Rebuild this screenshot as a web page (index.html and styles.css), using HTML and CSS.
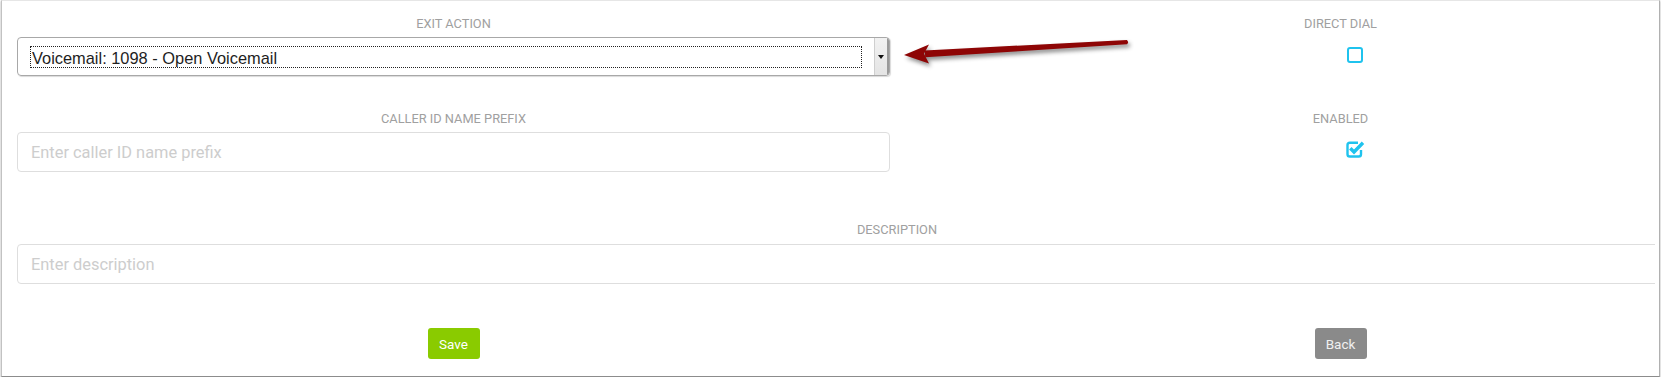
FILE: index.html
```html
<!DOCTYPE html>
<html lang="en">
<head>
    <meta charset="UTF-8">
    <title>Extension Settings</title>
    <link rel="stylesheet" href="styles.css">
</head>
<body>
    <div class="panel">
        <div class="viewport">
            <form class="form-grid">
                <div class="field">
                    <label class="field-label">Exit Action</label>
                    <div class="select-box">
                        <span class="select-value"><span class="select-focus">Voicemail: 1098 - Open Voicemail</span></span>
                        <span class="select-btn"><span class="caret"></span></span>
                    </div>
                </div>
                <div class="field field-check">
                    <label class="field-label">Direct Dial</label>
                    <span class="check"></span>
                </div>

                <div class="field row-2">
                    <label class="field-label" for="callerPrefix">Caller ID Name Prefix</label>
                    <input id="callerPrefix" class="text-input" type="text" placeholder="Enter caller ID name prefix">
                </div>
                <div class="field field-check row-2">
                    <label class="field-label">Enabled</label>
                    <svg class="check-on" width="19" height="17" viewBox="0 0 19 17">
                        <path d="M12 1.8 H3.8 Q1.5 1.8 1.5 4.1 V13.2 Q1.5 15.5 3.8 15.5 H12.7 Q15 15.5 15 13.2 V9" fill="none" stroke="#1fc3ee" stroke-width="2.4"/>
                        <path d="M4.3 7.3 L8 11 L17 1.8" fill="none" stroke="#1fc3ee" stroke-width="3.4"/>
                    </svg>
                </div>

                <div class="field field-wide">
                    <label class="field-label" for="description">Description</label>
                    <input id="description" class="text-input" type="text" placeholder="Enter description">
                </div>

                <div class="actions">
                    <button type="button" class="btn btn-save">Save</button>
                </div>
                <div class="actions">
                    <button type="button" class="btn btn-back">Back</button>
                </div>
            </form>
        </div>

        <!-- annotation arrow pointing at the select -->
        <svg class="arrow" width="250" height="45" viewBox="0 0 250 45">
            <path d="M34.8 22.4 L236.9 12 Q239 14 237.1 16.2 L35.2 29.2 Z" fill="#8e0505"/>
            <path d="M14 27 L39 16.5 L34 25.8 L39 35.5 Z" fill="#8e0505"/>
        </svg>
    </div>
</body>
</html>
```

FILE: styles.css
```css
body {
    margin: 0;
    background-color: #fff;
    font-family: Roboto, "Liberation Sans", sans-serif;
}

.panel {
    position: relative;
    margin: 0 1px;
    height: 377px;
    box-sizing: border-box;
    border-top: 1px solid #e6e6e6;
    border-left: 1px solid #c2c2c2;
    border-right: 1px solid #b0b0b0;
    border-bottom: 1px solid #8c8c8c;
    box-shadow: 0 1px 2px rgba(0, 0, 0, 0.35);
    padding: 15px 4px 0 15px;
    background-color: #fff;
}

.viewport {
    overflow: hidden;
    height: 345px;
}

.form-grid {
    display: grid;
    grid-template-columns: 873px 873px;
    column-gap: 14px;
    width: 1760px;
    align-items: start;
}

.field-label {
    display: block;
    text-align: center;
    font-size: 12.8px;
    line-height: 16px;
    color: #a0a0a0;
    text-transform: uppercase;
    margin-bottom: 5px;
}

.row-2 {
    margin-top: 35px;
}

.field-wide {
    grid-column: 1 / -1;
    margin-top: 50px;
}

.field-wide .field-label {
    margin-bottom: 6px;
}

/* native looking select */
.select-box {
    display: flex;
    height: 39px;
    box-sizing: border-box;
    border: 1px solid #a8a8a8;
    border-radius: 4px;
    overflow: hidden;
    box-shadow: 1px 1px 1px rgba(0, 0, 0, 0.15);
}

.select-value {
    flex: 1;
    padding: 8px 12px;
}

.select-focus {
    display: block;
    height: 22px;
    box-sizing: border-box;
    border: 1px dotted #222;
    padding: 1px 0 0 1px;
    font-family: "Liberation Sans", Arial, sans-serif;
    font-size: 16.4px;
    line-height: 20px;
    color: #1e1e1e;
}

.select-btn {
    width: 12px;
    display: flex;
    align-items: center;
    justify-content: center;
    background: linear-gradient(#f2f2f2, #e4e4e4);
    border-left: 1px solid #cfcfcf;
    border-right: 2px solid #9a9a9a;
}

.caret {
    width: 0;
    height: 0;
    border-left: 3px solid transparent;
    border-right: 3px solid transparent;
    border-top: 4px solid #111;
}

.field-check {
    text-align: center;
}

.field-check .field-label {
    margin-bottom: 15px;
}

.check {
    display: inline-block;
    width: 16px;
    height: 16px;
    box-sizing: border-box;
    border: 2px solid #1fc3ee;
    border-radius: 3px;
    margin-left: 28px;
}

.check-on {
    display: inline-block;
    margin-left: 30px;
    margin-top: -1px;
}

.text-input {
    display: block;
    width: 100%;
    height: 40px;
    box-sizing: border-box;
    border: 1px solid #dedede;
    border-radius: 4px;
    padding: 0 13px;
    font-family: Roboto, sans-serif;
    font-size: 16.4px;
    color: #333;
    outline: none;
}

.text-input::placeholder {
    color: #cdcdcd;
}

.actions {
    margin-top: 44px;
    text-align: center;
}

.btn {
    width: 52px;
    height: 31px;
    border: none;
    border-radius: 3px;
    font-family: Roboto, sans-serif;
    font-size: 13.5px;
    padding: 0;
    cursor: pointer;
}

.btn-save {
    background-color: #8acb00;
    color: #fff;
}

.btn-back {
    background-color: #8a8a8a;
    color: #f0f0f0;
}

.arrow {
    position: absolute;
    left: 888px;
    top: 27px;
    filter: drop-shadow(2px 3px 2px rgba(0, 0, 0, 0.45));
}
```
